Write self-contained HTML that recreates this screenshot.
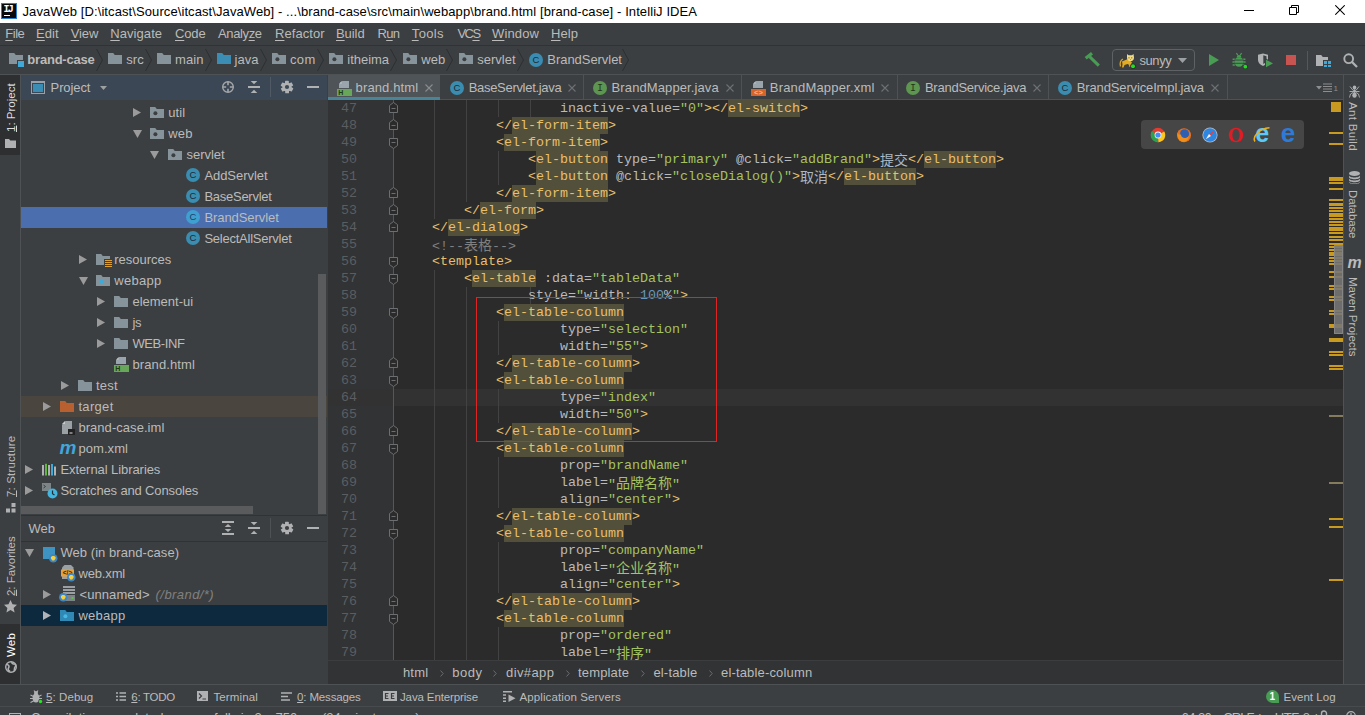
<!DOCTYPE html>
<html lang="en">
<head>
<meta charset="utf-8">
<title>JavaWeb - brand.html - IntelliJ IDEA</title>
<style>
*{box-sizing:border-box;margin:0;padding:0}
html,body{width:1365px;height:715px;overflow:hidden;background:#3c3f41}
body{position:relative;font-family:"Liberation Sans","Noto Sans CJK SC",sans-serif;font-size:13px;color:#bbbbbb;-webkit-font-smoothing:antialiased}
.abs{position:absolute}
.t{position:absolute;white-space:nowrap;line-height:16px}
u{text-decoration:underline;text-decoration-thickness:1px}
.t{text-underline-offset:2px}
/* title */
#title{position:absolute;left:0;top:0;width:1365px;height:23px;background:#fff;color:#000}
/* menu */
#menu{position:absolute;left:0;top:23px;width:1365px;height:23px;background:#3c3f41;border-bottom:1px solid #323232}
/* nav */
#nav{position:absolute;left:0;top:46px;width:1365px;height:29px;background:#3c3f41;border-bottom:1px solid #4f5254}
/* left stripe */
#lstripe{position:absolute;left:0;top:75px;width:21px;height:609px;background:#3c3f41;border-right:1px solid #4f5254}
/* project */
#proj{position:absolute;left:21px;top:75px;width:306px;height:441px;background:#3c3f41}
#projhead{position:absolute;left:0;top:0;width:306px;height:25px;background:#3b4754}
/* web */
#web{position:absolute;left:21px;top:516px;width:306px;height:169px;background:#3c3f41}
/* tabs */
#tabs{position:absolute;left:328px;top:75px;width:1015px;height:25px;background:#3c3f41;border-bottom:1px solid #4f5254}
/* editor */
#editor{position:absolute;left:328px;top:100px;width:1015px;height:560px;background:#2b2b2b;overflow:hidden}
#gutter{position:absolute;left:0;top:0;width:66px;height:560px;background:#313335}
/* crumbs */
#crumbs{position:absolute;left:328px;top:660px;width:1015px;height:25px;background:#313335;border-top:1px solid #3b3d3f}
/* right stripe */
#rstripe{position:absolute;left:1343px;top:75px;width:22px;height:609px;background:#3c3f41;border-left:1px solid #4f5254}
/* bottom */
#bottom{position:absolute;left:0;top:684px;width:1365px;height:23px;background:#3c3f41;border-top:1px solid #4f5254}
#status{position:absolute;left:0;top:706px;width:1365px;height:9px;background:#3c3f41;border-top:1px solid #484b4d}.ln{position:absolute;left:0;width:29px;text-align:right;font-family:"Liberation Mono",monospace;font-size:13.33px;line-height:17px;height:17px;color:#5b5e61}
.cl{position:absolute;white-space:pre;font-family:"Liberation Mono","Noto Sans CJK SC",monospace;font-size:13.33px;line-height:17px;height:17px;color:#a9b7c6}
.cl span{display:inline-block;height:17px;vertical-align:top}
.p{color:#e8bf6a}.h{color:#e8bf6a;background:#52503a}.a{color:#bababa}.s{color:#a5c261}.c{color:#808080}.n{color:#6897bb}.x{color:#a9b7c6}

.t.v{text-underline-offset:1px}
.k{font-weight:normal;font-size:14px;font-family:"Noto Sans CJK SC",sans-serif}

</style>
</head>
<body>
<div id="title">
<div class="abs" style="left:1px;top:3px;width:16px;height:16px;background:#0a0a0a;border:1px solid #2f7fd0"></div>
<span class="t" style="left:3.500px;top:4.500px;font-family:'Liberation Mono',monospace;font-size:10px;font-weight:bold;color:#fff;line-height:9px;letter-spacing:-1.700px">IJ</span>
<div class="abs" style="left:4px;top:15px;width:6px;height:1px;background:#fff"></div>
<span class="t" id="t0" style="left:22.5px;top:3.7px;font-size:13px;letter-spacing:0.091px;color:#000;">JavaWeb [D:\itcast\Source\itcast\JavaWeb] - ...\brand-case\src\main\webapp\brand.html [brand-case] - IntelliJ IDEA</span>
<div class="abs" style="left:1244px;top:10px;width:10px;height:1px;background:#000"></div>
<svg class="abs" style="left:1289px;top:5px" width="10" height="10" viewBox="0 0 10 10"><path d="M0.500 2.500h7v7h-7z M2.500 2.500v-2h7v7h-2" fill="none" stroke="#000" stroke-width="1"/></svg>
<svg class="abs" style="left:1335px;top:5px" width="10" height="10" viewBox="0 0 10 10"><path d="M0.300 0.300l9.400 9.400M9.700 0.300l-9.400 9.400" stroke="#000" stroke-width="1.050" fill="none"/></svg>
</div>
<div id="menu"></div>
<span class="t" id="t1" style="left:5.3px;top:26.3px;font-size:13px;letter-spacing:-0.492px;"><u>F</u>ile</span>
<span class="t" id="t2" style="left:36.1px;top:26.3px;font-size:13px;letter-spacing:0.023px;"><u>E</u>dit</span>
<span class="t" id="t3" style="left:70.7px;top:26.3px;font-size:13px;letter-spacing:-0.113px;"><u>V</u>iew</span>
<span class="t" id="t4" style="left:110.3px;top:26.3px;font-size:13px;letter-spacing:0.061px;"><u>N</u>avigate</span>
<span class="t" id="t5" style="left:175.0px;top:26.3px;font-size:13px;letter-spacing:-0.123px;"><u>C</u>ode</span>
<span class="t" id="t6" style="left:218.0px;top:26.3px;font-size:13px;letter-spacing:-0.381px;">Analy<u>z</u>e</span>
<span class="t" id="t7" style="left:275.0px;top:26.3px;font-size:13px;letter-spacing:0.057px;"><u>R</u>efactor</span>
<span class="t" id="t8" style="left:336.0px;top:26.3px;font-size:13px;letter-spacing:-0.064px;"><u>B</u>uild</span>
<span class="t" id="t9" style="left:377.5px;top:26.3px;font-size:13px;letter-spacing:-0.720px;">R<u>u</u>n</span>
<span class="t" id="t10" style="left:411.8px;top:26.3px;font-size:13px;letter-spacing:0.368px;"><u>T</u>ools</span>
<span class="t" id="t11" style="left:457.4px;top:26.3px;font-size:13px;letter-spacing:-1.511px;">VC<u>S</u></span>
<span class="t" id="t12" style="left:492.0px;top:26.3px;font-size:13px;letter-spacing:0.125px;"><u>W</u>indow</span>
<span class="t" id="t13" style="left:551.0px;top:26.3px;font-size:13px;letter-spacing:0.088px;"><u>H</u>elp</span>
<div id="nav"></div>
<svg class="abs" style="left:9px;top:53px" width="14" height="11" viewBox="0 0 14 11"><path d="M0 0h5.2l1.6 2H14v9H0z" fill="#87939a"/></svg>
<div class="abs" style="left:17px;top:60px;width:8px;height:8px;background:#3c3f41"></div>
<div class="abs" style="left:18px;top:61px;width:6px;height:6px;background:#40a9d8"></div>
<span class="t" id="t14" style="left:27.3px;top:51.5px;font-size:13px;letter-spacing:-0.208px;font-weight:bold;">brand-case</span>
<svg class="abs" style="left:96px;top:48px" width="7" height="24" viewBox="0 0 7 24"><path d="M0.5 1L6.5 12.0L0.5 23" fill="none" stroke="#2d2f31" stroke-width="1"/></svg>
<svg class="abs" style="left:144.8px;top:48px" width="7" height="24" viewBox="0 0 7 24"><path d="M0.5 1L6.5 12.0L0.5 23" fill="none" stroke="#2d2f31" stroke-width="1"/></svg>
<svg class="abs" style="left:204.7px;top:48px" width="7" height="24" viewBox="0 0 7 24"><path d="M0.5 1L6.5 12.0L0.5 23" fill="none" stroke="#2d2f31" stroke-width="1"/></svg>
<svg class="abs" style="left:259.7px;top:48px" width="7" height="24" viewBox="0 0 7 24"><path d="M0.5 1L6.5 12.0L0.5 23" fill="none" stroke="#2d2f31" stroke-width="1"/></svg>
<svg class="abs" style="left:316.9px;top:48px" width="7" height="24" viewBox="0 0 7 24"><path d="M0.5 1L6.5 12.0L0.5 23" fill="none" stroke="#2d2f31" stroke-width="1"/></svg>
<svg class="abs" style="left:390px;top:48px" width="7" height="24" viewBox="0 0 7 24"><path d="M0.5 1L6.5 12.0L0.5 23" fill="none" stroke="#2d2f31" stroke-width="1"/></svg>
<svg class="abs" style="left:446px;top:48px" width="7" height="24" viewBox="0 0 7 24"><path d="M0.5 1L6.5 12.0L0.5 23" fill="none" stroke="#2d2f31" stroke-width="1"/></svg>
<svg class="abs" style="left:516.5px;top:48px" width="7" height="24" viewBox="0 0 7 24"><path d="M0.5 1L6.5 12.0L0.5 23" fill="none" stroke="#2d2f31" stroke-width="1"/></svg>
<svg class="abs" style="left:622.3px;top:48px" width="7" height="24" viewBox="0 0 7 24"><path d="M0.5 1L6.5 12.0L0.5 23" fill="none" stroke="#2d2f31" stroke-width="1"/></svg>
<svg class="abs" style="left:108px;top:53px" width="14" height="11" viewBox="0 0 14 11"><path d="M0 0h5.2l1.6 2H14v9H0z" fill="#87939a"/></svg>
<span class="t" id="t15" style="left:126.3px;top:51.5px;font-size:13px;letter-spacing:0.052px;">src</span>
<svg class="abs" style="left:157px;top:53px" width="14" height="11" viewBox="0 0 14 11"><path d="M0 0h5.2l1.6 2H14v9H0z" fill="#87939a"/></svg>
<span class="t" id="t16" style="left:175.0px;top:51.5px;font-size:13px;letter-spacing:0.103px;">main</span>
<svg class="abs" style="left:217px;top:53px" width="14" height="11" viewBox="0 0 14 11"><path d="M0 0h5.2l1.6 2H14v9H0z" fill="#3b8db3"/></svg>
<span class="t" id="t17" style="left:234.6px;top:51.5px;font-size:13px;letter-spacing:-0.015px;">java</span>
<svg class="abs" style="left:272px;top:53px" width="14" height="11" viewBox="0 0 14 11"><path d="M0 0h5.2l1.6 2H14v9H0z" fill="#87939a"/><circle cx="5.400" cy="6.300" r="2" fill="#3c3f41"/></svg>
<span class="t" id="t18" style="left:290.0px;top:51.5px;font-size:13px;letter-spacing:0.346px;">com</span>
<svg class="abs" style="left:329px;top:53px" width="14" height="11" viewBox="0 0 14 11"><path d="M0 0h5.2l1.6 2H14v9H0z" fill="#87939a"/><circle cx="5.400" cy="6.300" r="2" fill="#3c3f41"/></svg>
<span class="t" id="t19" style="left:347.3px;top:51.5px;font-size:13px;letter-spacing:-0.032px;">itheima</span>
<svg class="abs" style="left:403px;top:53px" width="14" height="11" viewBox="0 0 14 11"><path d="M0 0h5.2l1.6 2H14v9H0z" fill="#87939a"/><circle cx="5.400" cy="6.300" r="2" fill="#3c3f41"/></svg>
<span class="t" id="t20" style="left:421.3px;top:51.5px;font-size:13px;letter-spacing:-0.020px;">web</span>
<svg class="abs" style="left:459px;top:53px" width="14" height="11" viewBox="0 0 14 11"><path d="M0 0h5.2l1.6 2H14v9H0z" fill="#87939a"/><circle cx="5.400" cy="6.300" r="2" fill="#3c3f41"/></svg>
<span class="t" id="t21" style="left:477.3px;top:51.5px;font-size:13px;">servlet</span>
<svg class="abs" style="left:529px;top:53px" width="14" height="14" viewBox="0 0 14 14"><circle cx="7.0" cy="7.0" r="7.0" fill="#3a8cb0"/><text x="7.0" y="10.4" text-anchor="middle" font-family="Liberation Sans, sans-serif" font-size="9.5" font-weight="normal" fill="#1e2a30">C</text></svg>
<span class="t" id="t22" style="left:547.3px;top:51.5px;font-size:13px;letter-spacing:-0.046px;">BrandServlet</span>
<svg class="abs" style="left:1084px;top:52px" width="17" height="16" viewBox="0 0 17 16"><path d="M1.700 6.200L8 1.300" stroke="#499c54" stroke-width="3.200" fill="none"/><path d="M5.600 4.600L14.800 13.600" stroke="#499c54" stroke-width="3" fill="none"/></svg>
<div class="abs" style="left:1112px;top:49px;width:83px;height:22px;border:1px solid #5f6264;border-radius:4px"></div>
<svg class="abs" style="left:1119px;top:53px" width="17" height="16" viewBox="0 0 17 16"><path d="M1.500 13.500c-1-3 0-6.500 2.500-7.500" stroke="#d9a62c" stroke-width="1.300" fill="none"/><path d="M3 8.500l6-2.500 4 3.500-1.500 2.500-3-1-3 1-1 2.500H3l0.500-3z" fill="#e3aa22"/><path d="M9.500 11l1 3h1.300l-0.500-3z" fill="#d9a62c"/><path d="M8 1l1.500 1.200h3.500L14.500 1l0.500 3.500c0 2.500-1.500 3.800-3.500 3.800S8 7 8 4.500z" fill="#f2dc82"/><circle cx="10" cy="4.800" r="0.600" fill="#5a4a1a"/><circle cx="12.800" cy="4.800" r="0.600" fill="#5a4a1a"/><path d="M10.800 6.300h1.200l-0.600 0.700z" fill="#5a4a1a"/><circle cx="14" cy="13.200" r="2.700" fill="#2a2d2e"/><circle cx="14" cy="13.200" r="2" fill="#1fe01f"/></svg>
<span class="t" id="t23" style="left:1139.5px;top:52.9px;font-size:13px;letter-spacing:-0.434px;">sunyy</span>
<svg class="abs" style="left:1178px;top:58px" width="9" height="5" viewBox="0 0 9 5"><path d="M0 0H9L4.5 5z" fill="#9da0a2"/></svg>
<svg class="abs" style="left:1209px;top:54px" width="10" height="12" viewBox="0 0 10 12"><path d="M0 0l10 6-10 6z" fill="#499c54"/></svg>
<svg class="abs" style="left:1232px;top:52px" width="17" height="17" viewBox="0 0 17 17"><ellipse cx="7" cy="10" rx="4.500" ry="4.800" fill="#499c54"/><path d="M4.600 5.400a2.400 2.300 0 0 1 4.800 0z" fill="#499c54"/><path d="M4.400 1.200l1.400 1.900M9.600 1.200L8.200 3.100" stroke="#499c54" stroke-width="1.200" fill="none"/><path d="M0.600 7.200h2.200M0.400 10h2.200M0.600 12.900h2.200M13.400 7.200h-2.200M13.600 10h-2.200M13.400 12.900h-2.200" stroke="#499c54" stroke-width="1.500" fill="none"/><path d="M2.500 8.100h9M2.500 11.300h9" stroke="#3c3f41" stroke-width="0.900"/><circle cx="13.300" cy="14.700" r="2.500" fill="#2a2d2e"/><circle cx="13.300" cy="14.700" r="1.900" fill="#1fe01f"/></svg>
<svg class="abs" style="left:1257px;top:53px" width="17" height="16" viewBox="0 0 17 16"><path d="M1 1.800L6 0.500l5 1.300V7c0 3-2.500 5-5 6C3.500 12 1 10 1 7z" fill="#afb1b3"/><path d="M6.300 2.300V11C9 9.500 9.500 8 9.500 6.500V3.200z" fill="#3c3f41"/><path d="M8 5l9 5.200-9 5.200z" fill="#3c3f41"/><path d="M9 6.700l7 3.700-7 3.900z" fill="#499c54"/></svg>
<div class="abs" style="left:1286px;top:55px;width:10px;height:10px;background:#c75450"></div>
<div class="abs" style="left:1307px;top:51px;width:1px;height:19px;background:#555759"></div>
<svg class="abs" style="left:1316px;top:55px" width="16" height="12" viewBox="0 0 16 12"><path d="M0 0h5.2l1.600 2H12v9H0z" fill="#afb1b3"/><rect x="7" y="5" width="9" height="7" fill="#3c3f41"/><rect x="8" y="6" width="3" height="3" fill="#40a9d8"/><rect x="12" y="6" width="3" height="3" fill="#40a9d8"/><rect x="8" y="10" width="3" height="2" fill="#40a9d8"/><rect x="12" y="10" width="3" height="2" fill="#40a9d8"/></svg>
<svg class="abs" style="left:1343px;top:53px" width="15" height="15" viewBox="0 0 15 15"><circle cx="5.700" cy="5.700" r="4.400" fill="none" stroke="#afb1b3" stroke-width="1.900"/><path d="M9 9l5 5" stroke="#afb1b3" stroke-width="2.300"/></svg>
<div id="lstripe"></div>
<div class="abs" style="left:0;top:75px;width:20px;height:80px;background:#2d2f30"></div>
<span class="t v" id="t24" style="left:10.8px;top:132.4px;font-size:11.5px;transform-origin:0 0;transform:rotate(-90deg) translateY(-8px);letter-spacing:0.011px;color:#dddddd;"><u>1</u>: Project</span>
<svg class="abs" style="left:5px;top:139px" width="11" height="9" viewBox="0 0 11 9"><path d="M0 0h4l1.300 1.600H11v7.400H0z" fill="#afb1b3"/></svg>
<span class="t v" id="t25" style="left:10.8px;top:497.3px;font-size:11.5px;transform-origin:0 0;transform:rotate(-90deg) translateY(-8px);letter-spacing:0.153px;color:#bbbbbb;"><u>7</u>: Structure</span>
<svg class="abs" style="left:6px;top:503px" width="10" height="10" viewBox="0 0 10 10"><rect x="5.500" y="0" width="4" height="4" fill="#afb1b3"/><rect x="0" y="5.500" width="4" height="4" fill="#afb1b3"/><rect x="5.500" y="5.500" width="4" height="4" fill="#afb1b3"/></svg>
<span class="t v" id="t26" style="left:10.8px;top:595.5px;font-size:11.5px;transform-origin:0 0;transform:rotate(-90deg) translateY(-8px);letter-spacing:-0.033px;color:#bbbbbb;"><u>2</u>: Favorites</span>
<svg class="abs" style="left:4px;top:600px" width="13" height="13" viewBox="0 0 13 13"><path d="M6.500 0l2 4.300 4.500 0.500-3.400 3.100 1 4.600-4.100-2.400-4.100 2.400 1-4.600L0 4.800l4.500-0.500z" fill="#afb1b3"/></svg>
<div class="abs" style="left:0;top:624px;width:20px;height:60px;background:#2d2f30"></div>
<span class="t v" id="t27" style="left:10.8px;top:657.2px;font-size:11.5px;transform-origin:0 0;transform:rotate(-90deg) translateY(-8px);letter-spacing:0.182px;color:#ffffff;">Web</span>
<svg class="abs" style="left:5px;top:661px" width="12" height="12" viewBox="0 0 12 12"><circle cx="6" cy="6" r="5.300" fill="none" stroke="#afb1b3" stroke-width="1.400"/><path d="M2 3.500c2 0.500 2.500 2 1.500 3.500s0 2.500 1.500 3.500M7 1c-0.500 1.500 1 2 2.500 2s1.500 2 0.500 3 0 2.500-1 4" fill="none" stroke="#afb1b3" stroke-width="1.600"/></svg>
<div id="proj"><div id="projhead"></div></div>
<div class="abs" style="left:31px;top:81px;width:14px;height:13px;border:1px solid #9aa0a6;border-top:2px solid #9aa0a6;background:#3a8db5;box-shadow:inset 0 0 0 1px #3b4754"></div>
<span class="t" id="t28" style="left:50.6px;top:79.5px;font-size:13px;letter-spacing:-0.110px;">Project</span>
<svg class="abs" style="left:100px;top:86px" width="7" height="4" viewBox="0 0 7 4"><path d="M0 0H7L3.5 4z" fill="#9da0a2"/></svg>
<svg class="abs" style="left:222px;top:81px" width="12" height="12" viewBox="0 0 12 12"><circle cx="6" cy="6" r="5.300" fill="none" stroke="#a4a7a9" stroke-width="1.400"/><path d="M6 0.800v3.400M6 11.200V7.800M0.800 6h3.400M11.200 6H7.800" stroke="#a4a7a9" stroke-width="1.600"/></svg>
<svg class="abs" style="left:248px;top:81px" width="12" height="12" viewBox="0 0 12 12"><rect x="0" y="5" width="12" height="2" fill="#afb1b3"/><path d="M2.700 0h6.600L6 3.200z" fill="#afb1b3"/><path d="M2.700 12h6.600L6 8.800z" fill="#afb1b3"/></svg>
<div class="abs" style="left:270px;top:77px;width:1px;height:20px;background:#505a64"></div>
<svg class="abs" style="left:280px;top:80px" width="14" height="14" viewBox="0 0 14 14"><g transform="translate(7,7)"><rect x="-2" y="-6.300" width="3.800" height="3.200" rx="0.600" transform="rotate(0)" fill="#afb1b3"/><rect x="-2" y="-6.300" width="3.800" height="3.200" rx="0.600" transform="rotate(60)" fill="#afb1b3"/><rect x="-2" y="-6.300" width="3.800" height="3.200" rx="0.600" transform="rotate(120)" fill="#afb1b3"/><rect x="-2" y="-6.300" width="3.800" height="3.200" rx="0.600" transform="rotate(180)" fill="#afb1b3"/><rect x="-2" y="-6.300" width="3.800" height="3.200" rx="0.600" transform="rotate(240)" fill="#afb1b3"/><rect x="-2" y="-6.300" width="3.800" height="3.200" rx="0.600" transform="rotate(300)" fill="#afb1b3"/><circle r="4.500" fill="#afb1b3"/><circle r="2.100" fill="#3b4754" class="gh"/></g></svg>
<div class="abs" style="left:307px;top:86px;width:12px;height:2px;background:#afb1b3"></div>
<div class="abs" style="left:21px;top:207px;width:306px;height:21px;background:#4b6eaf"></div>
<div class="abs" style="left:21px;top:396px;width:306px;height:21px;background:#4a453e"></div>
<svg class="abs" style="left:133px;top:108px" width="8" height="9" viewBox="0 0 8 9"><path d="M0 0L8 4.5L0 9z" fill="#9b9b9b"/></svg>
<svg class="abs" style="left:150px;top:107px" width="14" height="11" viewBox="0 0 14 11"><path d="M0 0h5.2l1.6 2H14v9H0z" fill="#87939a"/><circle cx="5.400" cy="6.300" r="2" fill="#3c3f41"/></svg>
<span class="t" id="t29" style="left:168.3px;top:104.5px;font-size:13px;letter-spacing:0.094px;">util</span>
<svg class="abs" style="left:132.5px;top:130px" width="9" height="8" viewBox="0 0 9 8"><path d="M0 0H9L4.5 8z" fill="#9b9b9b"/></svg>
<svg class="abs" style="left:150px;top:128px" width="14" height="11" viewBox="0 0 14 11"><path d="M0 0h5.2l1.6 2H14v9H0z" fill="#87939a"/><circle cx="5.400" cy="6.300" r="2" fill="#3c3f41"/></svg>
<span class="t" id="t30" style="left:168.3px;top:125.5px;font-size:13px;letter-spacing:0.147px;">web</span>
<svg class="abs" style="left:150.0px;top:151px" width="9" height="8" viewBox="0 0 9 8"><path d="M0 0H9L4.5 8z" fill="#9b9b9b"/></svg>
<svg class="abs" style="left:168px;top:149px" width="14" height="11" viewBox="0 0 14 11"><path d="M0 0h5.2l1.6 2H14v9H0z" fill="#87939a"/><circle cx="5.400" cy="6.300" r="2" fill="#3c3f41"/></svg>
<span class="t" id="t31" style="left:186.5px;top:146.5px;font-size:13px;letter-spacing:-0.028px;">servlet</span>
<svg class="abs" style="left:186px;top:168px" width="14" height="14" viewBox="0 0 14 14"><circle cx="7.0" cy="7.0" r="7.0" fill="#3a8cb0"/><text x="7.0" y="10.4" text-anchor="middle" font-family="Liberation Sans, sans-serif" font-size="9.5" font-weight="normal" fill="#1e2a30">C</text></svg>
<span class="t" id="t32" style="left:204.4px;top:167.5px;font-size:13px;letter-spacing:-0.049px;">AddServlet</span>
<svg class="abs" style="left:186px;top:189px" width="14" height="14" viewBox="0 0 14 14"><circle cx="7.0" cy="7.0" r="7.0" fill="#3a8cb0"/><text x="7.0" y="10.4" text-anchor="middle" font-family="Liberation Sans, sans-serif" font-size="9.5" font-weight="normal" fill="#1e2a30">C</text></svg>
<span class="t" id="t33" style="left:204.4px;top:188.5px;font-size:13px;letter-spacing:-0.263px;">BaseServlet</span>
<svg class="abs" style="left:186px;top:210px" width="14" height="14" viewBox="0 0 14 14"><circle cx="7.0" cy="7.0" r="7.0" fill="#3f9fd0"/><text x="7.0" y="10.4" text-anchor="middle" font-family="Liberation Sans, sans-serif" font-size="9.5" font-weight="normal" fill="#20406a">C</text></svg>
<span class="t" id="t34" style="left:204.4px;top:209.5px;font-size:13px;letter-spacing:-0.063px;">BrandServlet</span>
<svg class="abs" style="left:186px;top:231px" width="14" height="14" viewBox="0 0 14 14"><circle cx="7.0" cy="7.0" r="7.0" fill="#3a8cb0"/><text x="7.0" y="10.4" text-anchor="middle" font-family="Liberation Sans, sans-serif" font-size="9.5" font-weight="normal" fill="#1e2a30">C</text></svg>
<span class="t" id="t35" style="left:204.4px;top:230.5px;font-size:13px;letter-spacing:-0.240px;">SelectAllServlet</span>
<svg class="abs" style="left:79px;top:255px" width="8" height="9" viewBox="0 0 8 9"><path d="M0 0L8 4.5L0 9z" fill="#9b9b9b"/></svg>
<svg class="abs" style="left:96px;top:254px" width="14" height="11" viewBox="0 0 14 11"><path d="M0 0h5.2l1.6 2H14v9H0z" fill="#87939a"/></svg><svg class="abs" style="left:104px;top:259px" width="8" height="8" viewBox="0 0 8 8"><rect width="8" height="8" fill="#3c3f41"/><path d="M1 1.500h7M1 3.500h7M1 5.500h7M1 7.500h7" stroke="#e0a030" stroke-width="1"/></svg>
<span class="t" id="t36" style="left:114.3px;top:251.5px;font-size:13px;letter-spacing:-0.020px;">resources</span>
<svg class="abs" style="left:78.5px;top:277px" width="9" height="8" viewBox="0 0 9 8"><path d="M0 0H9L4.5 8z" fill="#9b9b9b"/></svg>
<svg class="abs" style="left:96px;top:275px" width="14" height="11" viewBox="0 0 14 11"><path d="M0 0h5.2l1.6 2H14v9H0z" fill="#87939a"/></svg><div class="abs" style="left:100px;top:280px;width:4px;height:3px;background:#40a9d8"></div>
<span class="t" id="t37" style="left:114.3px;top:272.5px;font-size:13px;letter-spacing:0.259px;">webapp</span>
<svg class="abs" style="left:97px;top:297px" width="8" height="9" viewBox="0 0 8 9"><path d="M0 0L8 4.5L0 9z" fill="#9b9b9b"/></svg>
<svg class="abs" style="left:114px;top:296px" width="14" height="11" viewBox="0 0 14 11"><path d="M0 0h5.2l1.6 2H14v9H0z" fill="#87939a"/></svg>
<span class="t" id="t38" style="left:132.4px;top:293.5px;font-size:13px;letter-spacing:0.010px;">element-ui</span>
<svg class="abs" style="left:97px;top:318px" width="8" height="9" viewBox="0 0 8 9"><path d="M0 0L8 4.5L0 9z" fill="#9b9b9b"/></svg>
<svg class="abs" style="left:114px;top:317px" width="14" height="11" viewBox="0 0 14 11"><path d="M0 0h5.2l1.6 2H14v9H0z" fill="#87939a"/></svg>
<span class="t" id="t39" style="left:132.4px;top:314.5px;font-size:13px;letter-spacing:-0.195px;">js</span>
<svg class="abs" style="left:97px;top:339px" width="8" height="9" viewBox="0 0 8 9"><path d="M0 0L8 4.5L0 9z" fill="#9b9b9b"/></svg>
<svg class="abs" style="left:114px;top:338px" width="14" height="11" viewBox="0 0 14 11"><path d="M0 0h5.2l1.6 2H14v9H0z" fill="#87939a"/></svg>
<span class="t" id="t40" style="left:132.4px;top:335.5px;font-size:13px;letter-spacing:-0.384px;">WEB-INF</span>
<svg class="abs" style="left:114px;top:357px" width="15" height="15" viewBox="0 0 15 15"><path d="M5.300 0H12v7H2V3.300z" fill="#99a4ac"/><path d="M4.700 0v2.700H2z" fill="#b8c0c6"/><rect x="0" y="8" width="15" height="7" fill="#68a659"/><text x="1.2" y="14.2" font-family="Liberation Sans, sans-serif" font-size="7" font-weight="bold" fill="#1f3a18">H</text></svg>
<span class="t" id="t41" style="left:132.4px;top:356.5px;font-size:13px;letter-spacing:0.118px;">brand.html</span>
<svg class="abs" style="left:61px;top:381px" width="8" height="9" viewBox="0 0 8 9"><path d="M0 0L8 4.5L0 9z" fill="#9b9b9b"/></svg>
<svg class="abs" style="left:78px;top:380px" width="14" height="11" viewBox="0 0 14 11"><path d="M0 0h5.2l1.6 2H14v9H0z" fill="#87939a"/></svg>
<span class="t" id="t42" style="left:96.0px;top:377.5px;font-size:13px;letter-spacing:0.208px;">test</span>
<svg class="abs" style="left:43px;top:402px" width="8" height="9" viewBox="0 0 8 9"><path d="M0 0L8 4.5L0 9z" fill="#9b9b9b"/></svg>
<svg class="abs" style="left:60px;top:401px" width="14" height="11" viewBox="0 0 14 11"><path d="M0 0h5.2l1.6 2H14v9H0z" fill="#b8602f"/></svg>
<span class="t" id="t43" style="left:78.4px;top:398.5px;font-size:13px;letter-spacing:0.325px;">target</span>
<svg class="abs" style="left:61px;top:421px" width="14" height="14" viewBox="0 0 14 14"><path d="M4.500 0H11v13H1V3.500z" fill="#9aa0a4"/><path d="M4 0v3H1z" fill="#c7cbcd"/><rect x="7" y="8" width="7" height="6" fill="#222"/><rect x="8.500" y="11.500" width="3" height="1" fill="#ddd"/></svg>
<span class="t" id="t44" style="left:78.4px;top:419.5px;font-size:13px;letter-spacing:0.052px;">brand-case.iml</span>
<span class="t" style="left:59.500px;top:440px;font-size:19px;font-style:italic;font-weight:bold;color:#3fa7dc;line-height:16px;letter-spacing:-1px">m</span>
<span class="t" id="t45" style="left:78.4px;top:440.5px;font-size:13px;letter-spacing:0.068px;">pom.xml</span>
<svg class="abs" style="left:25px;top:465px" width="8" height="9" viewBox="0 0 8 9"><path d="M0 0L8 4.5L0 9z" fill="#9b9b9b"/></svg>
<svg class="abs" style="left:42px;top:463px" width="14" height="13" viewBox="0 0 14 13"><rect x="0" y="2" width="2" height="10.500" fill="#afb1b3"/><rect x="3" y="0.800" width="2" height="11.700" fill="#62b543"/><rect x="6" y="2" width="2" height="10.500" fill="#afb1b3"/><rect x="9" y="1" width="2" height="11.500" fill="#40a9d8"/><rect x="12" y="3.500" width="2" height="9" fill="#afb1b3"/></svg>
<span class="t" id="t46" style="left:60.4px;top:461.5px;font-size:13px;letter-spacing:-0.070px;">External Libraries</span>
<svg class="abs" style="left:25px;top:486px" width="8" height="9" viewBox="0 0 8 9"><path d="M0 0L8 4.5L0 9z" fill="#9b9b9b"/></svg>
<svg class="abs" style="left:42px;top:483px" width="16" height="16" viewBox="0 0 16 16"><rect x="0" y="0" width="9" height="8" fill="#7d8488"/><path d="M1.500 2l2 1.500-2 1.500" stroke="#3c3f41" fill="none" stroke-width="1"/><circle cx="10.500" cy="10.500" r="5" fill="#40b6e0"/><path d="M10.500 7.500v3.200l2 1.200" stroke="#2b2b2b" fill="none" stroke-width="1.200"/></svg>
<span class="t" id="t47" style="left:60.4px;top:482.5px;font-size:13px;letter-spacing:-0.142px;">Scratches and Consoles</span>
<div class="abs" style="left:318px;top:274px;width:8px;height:240px;background:#595b5d"></div>
<div class="abs" style="left:21px;top:506px;width:232px;height:8px;background:#595b5d"></div>
<div class="abs" style="left:21px;top:515px;width:306px;height:1px;background:#323232"></div>
<div id="web"></div>
<span class="t" id="t48" style="left:28.4px;top:520.9px;font-size:13px;letter-spacing:0.067px;">Web</span>
<svg class="abs" style="left:222px;top:521px" width="12" height="14" viewBox="0 0 12 14"><rect x="0" y="0" width="12" height="2" fill="#afb1b3"/><rect x="0" y="12" width="12" height="2" fill="#afb1b3"/><path d="M2.700 6h6.600L6 3z" fill="#afb1b3"/><path d="M2.700 8h6.600L6 11z" fill="#afb1b3"/></svg>
<svg class="abs" style="left:248px;top:522px" width="12" height="12" viewBox="0 0 12 12"><rect x="0" y="5" width="12" height="2" fill="#afb1b3"/><path d="M2.700 0h6.600L6 3.200z" fill="#afb1b3"/><path d="M2.700 12h6.600L6 8.800z" fill="#afb1b3"/></svg>
<div class="abs" style="left:270px;top:518px;width:1px;height:20px;background:#4f5254"></div>
<svg class="abs" style="left:280px;top:521px" width="14" height="14" viewBox="0 0 14 14"><g transform="translate(7,7)"><rect x="-2" y="-6.300" width="3.800" height="3.200" rx="0.600" transform="rotate(0)" fill="#afb1b3"/><rect x="-2" y="-6.300" width="3.800" height="3.200" rx="0.600" transform="rotate(60)" fill="#afb1b3"/><rect x="-2" y="-6.300" width="3.800" height="3.200" rx="0.600" transform="rotate(120)" fill="#afb1b3"/><rect x="-2" y="-6.300" width="3.800" height="3.200" rx="0.600" transform="rotate(180)" fill="#afb1b3"/><rect x="-2" y="-6.300" width="3.800" height="3.200" rx="0.600" transform="rotate(240)" fill="#afb1b3"/><rect x="-2" y="-6.300" width="3.800" height="3.200" rx="0.600" transform="rotate(300)" fill="#afb1b3"/><circle r="4.500" fill="#afb1b3"/><circle r="2.100" fill="#3c3f41" class="gh"/></g></svg>
<div class="abs" style="left:307px;top:527px;width:12px;height:2px;background:#afb1b3"></div>
<div class="abs" style="left:21px;top:541px;width:306px;height:1px;background:#323232"></div>
<div class="abs" style="left:21px;top:605px;width:306px;height:21px;background:#0d293e"></div>
<svg class="abs" style="left:24.5px;top:549px" width="9" height="8" viewBox="0 0 9 8"><path d="M0 0H9L4.5 8z" fill="#9b9b9b"/></svg>
<svg class="abs" style="left:43px;top:547px" width="12" height="12" viewBox="0 0 12 12"><rect width="12" height="12" fill="#3d94c2"/></svg><svg class="abs" style="left:49px;top:554px" width="8.5" height="8.5" viewBox="0 0 9 9"><circle cx="4.500" cy="4.500" r="4.500" fill="#3f86c6"/><path d="M2 3.500c1-2 4-2 5 0 0.500 1.500-1 2-1.500 3.500h-2C3 5.500 1.500 5 2 3.500z" fill="#f4d03f"/></svg>
<span class="t" id="t49" style="left:60.4px;top:544.5px;font-size:13px;letter-spacing:0.061px;">Web (in brand-case)</span>
<svg class="abs" style="left:61px;top:565px" width="14" height="15" viewBox="0 0 14 15"><path d="M3.500 0H10l2.500 2.500V14H1V2.500z" fill="#9aa0a4"/><rect x="0" y="4.500" width="13" height="7" fill="#e8a13a"/><text x="6.500" y="10.300" text-anchor="middle" font-family="Liberation Sans, sans-serif" font-size="6.500" font-weight="bold" fill="#3a2405">&lt;/&gt;</text></svg><svg class="abs" style="left:67px;top:573px" width="8.5" height="8.5" viewBox="0 0 9 9"><circle cx="4.500" cy="4.500" r="4.500" fill="#3f86c6"/><path d="M2 3.500c1-2 4-2 5 0 0.500 1.500-1 2-1.500 3.500h-2C3 5.500 1.500 5 2 3.500z" fill="#f4d03f"/></svg>
<span class="t" id="t50" style="left:78.4px;top:565.5px;font-size:13px;letter-spacing:-0.141px;">web.xml</span>
<svg class="abs" style="left:43px;top:590px" width="8" height="9" viewBox="0 0 8 9"><path d="M0 0L8 4.5L0 9z" fill="#9b9b9b"/></svg>
<svg class="abs" style="left:63px;top:586px" width="12" height="15" viewBox="0 0 12 15"><rect x="0" y="0" width="12" height="2" fill="#9aa0a4"/><rect x="0" y="3" width="12" height="2" fill="#9aa0a4"/><rect x="0" y="6" width="12" height="2" fill="#9aa0a4"/><rect x="0" y="9" width="12" height="6" fill="#7d8488"/><rect x="8.500" y="11" width="2" height="2" fill="#58c24a"/></svg><svg class="abs" style="left:59px;top:593px" width="8.5" height="8.5" viewBox="0 0 9 9"><circle cx="4.500" cy="4.500" r="4.500" fill="#3f86c6"/><path d="M2 3.500c1-2 4-2 5 0 0.500 1.500-1 2-1.500 3.500h-2C3 5.500 1.500 5 2 3.500z" fill="#f4d03f"/></svg>
<span class="t" id="t51" style="left:79.5px;top:586.5px;font-size:13px;letter-spacing:0.077px;">&lt;unnamed&gt;</span>
<span class="t" id="t52" style="left:155.6px;top:586.5px;font-size:13px;letter-spacing:0.430px;color:#808080;font-style:italic;">(/brand/*)</span>
<svg class="abs" style="left:43px;top:611px" width="8" height="9" viewBox="0 0 8 9"><path d="M0 0L8 4.5L0 9z" fill="#b0b4b8"/></svg>
<svg class="abs" style="left:60px;top:610px" width="14" height="11" viewBox="0 0 14 11"><path d="M0 0h5.2l1.6 2H14v9H0z" fill="#3088b5"/><circle cx="5.400" cy="6.300" r="2" fill="#45b8e6"/></svg>
<span class="t" id="t53" style="left:78.4px;top:607.5px;font-size:13px;letter-spacing:0.276px;">webapp</span>
<div id="tabs"></div>
<div class="abs" style="left:328px;top:75px;width:112px;height:25px;background:#4e5457"></div>
<div class="abs" style="left:328px;top:97px;width:112px;height:3px;background:#4a8499"></div>
<div class="abs" style="left:583px;top:75px;width:1px;height:24px;background:#4f5254"></div>
<div class="abs" style="left:741px;top:75px;width:1px;height:24px;background:#4f5254"></div>
<div class="abs" style="left:896.5px;top:75px;width:1px;height:24px;background:#4f5254"></div>
<div class="abs" style="left:1048px;top:75px;width:1px;height:24px;background:#4f5254"></div>
<div class="abs" style="left:1226.5px;top:75px;width:1px;height:24px;background:#4f5254"></div>
<svg class="abs" style="left:337px;top:81px" width="15" height="15" viewBox="0 0 15 15"><path d="M5.300 0H12v7H2V3.300z" fill="#99a4ac"/><path d="M4.700 0v2.700H2z" fill="#b8c0c6"/><rect x="0" y="8" width="15" height="7" fill="#68a659"/><text x="1.2" y="14.2" font-family="Liberation Sans, sans-serif" font-size="7" font-weight="bold" fill="#1f3a18">H</text></svg>
<span class="t" id="t54" style="left:355.6px;top:79.5px;font-size:13px;letter-spacing:0.118px;">brand.html</span>
<svg class="abs" style="left:424.6px;top:83.5px" width="8" height="8" viewBox="0 0 8 8"><path d="M0.500 0.500l7 7M7.500 0.500l-7 7" stroke="#8a8d8f" stroke-width="1.100" fill="none"/></svg>
<svg class="abs" style="left:450px;top:81px" width="14" height="14" viewBox="0 0 14 14"><circle cx="7.0" cy="7.0" r="7.0" fill="#3a8cb0"/><text x="7.0" y="10.4" text-anchor="middle" font-family="Liberation Sans, sans-serif" font-size="9.5" font-weight="normal" fill="#1e2a30">C</text></svg>
<span class="t" id="t55" style="left:468.7px;top:79.5px;font-size:13px;letter-spacing:-0.304px;">BaseServlet.java</span>
<svg class="abs" style="left:567.5px;top:83.5px" width="8" height="8" viewBox="0 0 8 8"><path d="M0.500 0.500l7 7M7.500 0.500l-7 7" stroke="#6e7173" stroke-width="1.100" fill="none"/></svg>
<svg class="abs" style="left:593px;top:81px" width="14" height="14" viewBox="0 0 14 14"><circle cx="7.0" cy="7.0" r="7.0" fill="#5d9651"/><text x="7.0" y="10.4" text-anchor="middle" font-family="Liberation Mono, sans-serif" font-size="10" font-weight="normal" fill="#1f3518">I</text></svg>
<span class="t" id="t56" style="left:611.6px;top:79.5px;font-size:13px;letter-spacing:0.105px;">BrandMapper.java</span>
<svg class="abs" style="left:725.7px;top:83.5px" width="8" height="8" viewBox="0 0 8 8"><path d="M0.500 0.500l7 7M7.500 0.500l-7 7" stroke="#6e7173" stroke-width="1.100" fill="none"/></svg>
<svg class="abs" style="left:750.5px;top:81px" width="15" height="15" viewBox="0 0 15 15"><path d="M5.300 0H12v7H2V3.300z" fill="#99a4ac"/><path d="M4.700 0v2.700H2z" fill="#b8c0c6"/><rect x="0" y="8" width="15" height="7" fill="#d6642a"/><text x="7.5" y="14" text-anchor="middle" font-family="Liberation Sans, sans-serif" font-size="7.500" font-weight="bold" fill="#f6b88a">&lt;&gt;</text></svg>
<span class="t" id="t57" style="left:769.8px;top:79.5px;font-size:13px;letter-spacing:0.187px;">BrandMapper.xml</span>
<svg class="abs" style="left:881px;top:83.5px" width="8" height="8" viewBox="0 0 8 8"><path d="M0.500 0.500l7 7M7.500 0.500l-7 7" stroke="#6e7173" stroke-width="1.100" fill="none"/></svg>
<svg class="abs" style="left:906px;top:81px" width="14" height="14" viewBox="0 0 14 14"><circle cx="7.0" cy="7.0" r="7.0" fill="#5d9651"/><text x="7.0" y="10.4" text-anchor="middle" font-family="Liberation Mono, sans-serif" font-size="10" font-weight="normal" fill="#1f3518">I</text></svg>
<span class="t" id="t58" style="left:924.9px;top:79.5px;font-size:13px;letter-spacing:-0.241px;">BrandService.java</span>
<svg class="abs" style="left:1032.7px;top:83.5px" width="8" height="8" viewBox="0 0 8 8"><path d="M0.500 0.500l7 7M7.500 0.500l-7 7" stroke="#6e7173" stroke-width="1.100" fill="none"/></svg>
<svg class="abs" style="left:1058px;top:81px" width="14" height="14" viewBox="0 0 14 14"><circle cx="7.0" cy="7.0" r="7.0" fill="#3a8cb0"/><text x="7.0" y="10.4" text-anchor="middle" font-family="Liberation Sans, sans-serif" font-size="9.5" font-weight="normal" fill="#1e2a30">C</text></svg>
<span class="t" id="t59" style="left:1076.8px;top:79.5px;font-size:13px;letter-spacing:-0.141px;">BrandServiceImpl.java</span>
<svg class="abs" style="left:1210.5px;top:83.5px" width="8" height="8" viewBox="0 0 8 8"><path d="M0.500 0.500l7 7M7.500 0.500l-7 7" stroke="#6e7173" stroke-width="1.100" fill="none"/></svg>
<svg class="abs" style="left:1316px;top:86px" width="6" height="3.5" viewBox="0 0 6 3.5"><path d="M0 0H6L3.0 3.5z" fill="#8c8e90"/></svg>
<svg class="abs" style="left:1323px;top:83px" width="9" height="9" viewBox="0 0 9 9"><path d="M0 1h9M0 3.500h9M0 6h9M0 8.500h9" stroke="#8c8e90" stroke-width="1"/></svg>
<span class="t" style="left:1333.500px;top:80.500px;font-size:8px;color:#8c8e90">1</span>
<div id="editor"><div id="gutter"></div>
<div class="abs" style="left:0;top:289px;width:1015px;height:17px;background:#323232"></div>
<div class="abs" style="left:106px;top:0px;width:1px;height:119px;background:#424242"></div>
<div class="abs" style="left:138px;top:0px;width:1px;height:102px;background:#424242"></div>
<div class="abs" style="left:170px;top:0px;width:1px;height:17px;background:#424242"></div>
<div class="abs" style="left:170px;top:51px;width:1px;height:34px;background:#424242"></div>
<div class="abs" style="left:202px;top:0px;width:1px;height:17px;background:#424242"></div>
<div class="abs" style="left:106px;top:170px;width:1px;height:391px;background:#424242"></div>
<div class="abs" style="left:138px;top:187px;width:1px;height:374px;background:#424242"></div>
<div class="abs" style="left:170px;top:221px;width:1px;height:34px;background:#424242"></div>
<div class="abs" style="left:170px;top:289px;width:1px;height:34px;background:#424242"></div>
<div class="abs" style="left:170px;top:357px;width:1px;height:51px;background:#424242"></div>
<div class="abs" style="left:170px;top:442px;width:1px;height:51px;background:#424242"></div>
<div class="abs" style="left:170px;top:527px;width:1px;height:34px;background:#424242"></div>
<div class="abs" style="left:202px;top:187px;width:1px;height:17px;background:#424242"></div>
<div class="ln" style="top:0px">47</div>
<div class="cl" style="top:0px;left:232px"><span class="a">inactive-value=</span><span class="s">"0"</span><span class="p">&gt;&lt;/</span><span class="h">el-switch</span><span class="p">&gt;</span></div>
<div class="ln" style="top:17px">48</div>
<div class="cl" style="top:17px;left:168px"><span class="p">&lt;/</span><span class="h">el-form-item</span><span class="p">&gt;</span></div>
<div class="ln" style="top:34px">49</div>
<div class="cl" style="top:34px;left:168px"><span class="p">&lt;</span><span class="h">el-form-item</span><span class="p">&gt;</span></div>
<div class="ln" style="top:51px">50</div>
<div class="cl" style="top:51px;left:200px"><span class="p">&lt;</span><span class="h">el-button</span><span class="a"> type=</span><span class="s">"primary"</span><span class="a"> @click=</span><span class="s">"addBrand"</span><span class="p">&gt;</span><span class="x"><b class="k">提交</b></span><span class="p">&lt;/</span><span class="h">el-button</span><span class="p">&gt;</span></div>
<div class="ln" style="top:68px">51</div>
<div class="cl" style="top:68px;left:200px"><span class="p">&lt;</span><span class="h">el-button</span><span class="a"> @click=</span><span class="s">"closeDialog()"</span><span class="p">&gt;</span><span class="x"><b class="k">取消</b></span><span class="p">&lt;/</span><span class="h">el-button</span><span class="p">&gt;</span></div>
<div class="ln" style="top:85px">52</div>
<div class="cl" style="top:85px;left:168px"><span class="p">&lt;/</span><span class="h">el-form-item</span><span class="p">&gt;</span></div>
<div class="ln" style="top:102px">53</div>
<div class="cl" style="top:102px;left:136px"><span class="p">&lt;/</span><span class="h">el-form</span><span class="p">&gt;</span></div>
<div class="ln" style="top:119px">54</div>
<div class="cl" style="top:119px;left:104px"><span class="p">&lt;/</span><span class="h">el-dialog</span><span class="p">&gt;</span></div>
<div class="ln" style="top:136px">55</div>
<div class="cl" style="top:136px;left:104px"><span class="c">&lt;!--<b class="k">表格</b>--&gt;</span></div>
<div class="ln" style="top:153px">56</div>
<div class="cl" style="top:153px;left:104px"><span class="p">&lt;template&gt;</span></div>
<div class="ln" style="top:170px">57</div>
<div class="cl" style="top:170px;left:136px"><span class="p">&lt;</span><span class="h">el-table</span><span class="a"> :data=</span><span class="s">"tableData"</span></div>
<div class="ln" style="top:187px">58</div>
<div class="cl" style="top:187px;left:200px"><span class="a">style=</span><span class="s">"</span><span class="a">width: </span><span class="n">100</span><span class="a">%</span><span class="s">"</span><span class="p">&gt;</span></div>
<div class="ln" style="top:204px">59</div>
<div class="cl" style="top:204px;left:168px"><span class="p">&lt;</span><span class="h">el-table-column</span></div>
<div class="ln" style="top:221px">60</div>
<div class="cl" style="top:221px;left:232px"><span class="a">type=</span><span class="s">"selection"</span></div>
<div class="ln" style="top:238px">61</div>
<div class="cl" style="top:238px;left:232px"><span class="a">width=</span><span class="s">"55"</span><span class="p">&gt;</span></div>
<div class="ln" style="top:255px">62</div>
<div class="cl" style="top:255px;left:168px"><span class="p">&lt;/</span><span class="h">el-table-column</span><span class="p">&gt;</span></div>
<div class="ln" style="top:272px">63</div>
<div class="cl" style="top:272px;left:168px"><span class="p">&lt;</span><span class="h">el-table-column</span></div>
<div class="ln" style="top:289px">64</div>
<div class="cl" style="top:289px;left:232px"><span class="a">type=</span><span class="s">"index"</span></div>
<div class="ln" style="top:306px">65</div>
<div class="cl" style="top:306px;left:232px"><span class="a">width=</span><span class="s">"50"</span><span class="p">&gt;</span></div>
<div class="ln" style="top:323px">66</div>
<div class="cl" style="top:323px;left:168px"><span class="p">&lt;/</span><span class="h">el-table-column</span><span class="p">&gt;</span></div>
<div class="ln" style="top:340px">67</div>
<div class="cl" style="top:340px;left:168px"><span class="p">&lt;</span><span class="h">el-table-column</span></div>
<div class="ln" style="top:357px">68</div>
<div class="cl" style="top:357px;left:232px"><span class="a">prop=</span><span class="s">"brandName"</span></div>
<div class="ln" style="top:374px">69</div>
<div class="cl" style="top:374px;left:232px"><span class="a">label=</span><span class="s">"<b class="k">品牌名称</b>"</span></div>
<div class="ln" style="top:391px">70</div>
<div class="cl" style="top:391px;left:232px"><span class="a">align=</span><span class="s">"center"</span><span class="p">&gt;</span></div>
<div class="ln" style="top:408px">71</div>
<div class="cl" style="top:408px;left:168px"><span class="p">&lt;/</span><span class="h">el-table-column</span><span class="p">&gt;</span></div>
<div class="ln" style="top:425px">72</div>
<div class="cl" style="top:425px;left:168px"><span class="p">&lt;</span><span class="h">el-table-column</span></div>
<div class="ln" style="top:442px">73</div>
<div class="cl" style="top:442px;left:232px"><span class="a">prop=</span><span class="s">"companyName"</span></div>
<div class="ln" style="top:459px">74</div>
<div class="cl" style="top:459px;left:232px"><span class="a">label=</span><span class="s">"<b class="k">企业名称</b>"</span></div>
<div class="ln" style="top:476px">75</div>
<div class="cl" style="top:476px;left:232px"><span class="a">align=</span><span class="s">"center"</span><span class="p">&gt;</span></div>
<div class="ln" style="top:493px">76</div>
<div class="cl" style="top:493px;left:168px"><span class="p">&lt;/</span><span class="h">el-table-column</span><span class="p">&gt;</span></div>
<div class="ln" style="top:510px">77</div>
<div class="cl" style="top:510px;left:168px"><span class="p">&lt;</span><span class="h">el-table-column</span></div>
<div class="ln" style="top:527px">78</div>
<div class="cl" style="top:527px;left:232px"><span class="a">prop=</span><span class="s">"ordered"</span></div>
<div class="ln" style="top:544px">79</div>
<div class="cl" style="top:544px;left:232px"><span class="a">label=</span><span class="s">"<b class="k">排序</b>"</span></div>
<div class="abs" style="left:65px;top:0;width:1px;height:560px;background:#555759"></div>
<svg class="abs" style="left:61px;top:2px" width="9" height="11" viewBox="0 0 9 11"><path d="M0.500 10.500v-7l4-3 4 3v7z" fill="#2b2b2b" stroke="#6c6f72" stroke-width="1"/><path d="M2.500 6.500h4" stroke="#6c6f72" stroke-width="1"/></svg>
<svg class="abs" style="left:61px;top:19px" width="9" height="11" viewBox="0 0 9 11"><path d="M0.500 10.500v-7l4-3 4 3v7z" fill="#2b2b2b" stroke="#6c6f72" stroke-width="1"/><path d="M2.500 6.500h4" stroke="#6c6f72" stroke-width="1"/></svg>
<svg class="abs" style="left:61px;top:87px" width="9" height="11" viewBox="0 0 9 11"><path d="M0.500 10.500v-7l4-3 4 3v7z" fill="#2b2b2b" stroke="#6c6f72" stroke-width="1"/><path d="M2.500 6.500h4" stroke="#6c6f72" stroke-width="1"/></svg>
<svg class="abs" style="left:61px;top:104px" width="9" height="11" viewBox="0 0 9 11"><path d="M0.500 10.500v-7l4-3 4 3v7z" fill="#2b2b2b" stroke="#6c6f72" stroke-width="1"/><path d="M2.500 6.500h4" stroke="#6c6f72" stroke-width="1"/></svg>
<svg class="abs" style="left:61px;top:121px" width="9" height="11" viewBox="0 0 9 11"><path d="M0.500 10.500v-7l4-3 4 3v7z" fill="#2b2b2b" stroke="#6c6f72" stroke-width="1"/><path d="M2.500 6.500h4" stroke="#6c6f72" stroke-width="1"/></svg>
<svg class="abs" style="left:61px;top:257px" width="9" height="11" viewBox="0 0 9 11"><path d="M0.500 10.500v-7l4-3 4 3v7z" fill="#2b2b2b" stroke="#6c6f72" stroke-width="1"/><path d="M2.500 6.500h4" stroke="#6c6f72" stroke-width="1"/></svg>
<svg class="abs" style="left:61px;top:325px" width="9" height="11" viewBox="0 0 9 11"><path d="M0.500 10.500v-7l4-3 4 3v7z" fill="#2b2b2b" stroke="#6c6f72" stroke-width="1"/><path d="M2.500 6.500h4" stroke="#6c6f72" stroke-width="1"/></svg>
<svg class="abs" style="left:61px;top:410px" width="9" height="11" viewBox="0 0 9 11"><path d="M0.500 10.500v-7l4-3 4 3v7z" fill="#2b2b2b" stroke="#6c6f72" stroke-width="1"/><path d="M2.500 6.500h4" stroke="#6c6f72" stroke-width="1"/></svg>
<svg class="abs" style="left:61px;top:495px" width="9" height="11" viewBox="0 0 9 11"><path d="M0.500 10.500v-7l4-3 4 3v7z" fill="#2b2b2b" stroke="#6c6f72" stroke-width="1"/><path d="M2.500 6.500h4" stroke="#6c6f72" stroke-width="1"/></svg>
<svg class="abs" style="left:61px;top:38px" width="9" height="11" viewBox="0 0 9 11"><path d="M0.500 0.500v7l4 3 4-3v-7z" fill="#2b2b2b" stroke="#6c6f72" stroke-width="1"/><path d="M2.500 4.500h4" stroke="#6c6f72" stroke-width="1"/></svg>
<svg class="abs" style="left:61px;top:157px" width="9" height="11" viewBox="0 0 9 11"><path d="M0.500 0.500v7l4 3 4-3v-7z" fill="#2b2b2b" stroke="#6c6f72" stroke-width="1"/><path d="M2.500 4.500h4" stroke="#6c6f72" stroke-width="1"/></svg>
<svg class="abs" style="left:61px;top:174px" width="9" height="11" viewBox="0 0 9 11"><path d="M0.500 0.500v7l4 3 4-3v-7z" fill="#2b2b2b" stroke="#6c6f72" stroke-width="1"/><path d="M2.500 4.500h4" stroke="#6c6f72" stroke-width="1"/></svg>
<svg class="abs" style="left:61px;top:208px" width="9" height="11" viewBox="0 0 9 11"><path d="M0.500 0.500v7l4 3 4-3v-7z" fill="#2b2b2b" stroke="#6c6f72" stroke-width="1"/><path d="M2.500 4.500h4" stroke="#6c6f72" stroke-width="1"/></svg>
<svg class="abs" style="left:61px;top:276px" width="9" height="11" viewBox="0 0 9 11"><path d="M0.500 0.500v7l4 3 4-3v-7z" fill="#2b2b2b" stroke="#6c6f72" stroke-width="1"/><path d="M2.500 4.500h4" stroke="#6c6f72" stroke-width="1"/></svg>
<svg class="abs" style="left:61px;top:344px" width="9" height="11" viewBox="0 0 9 11"><path d="M0.500 0.500v7l4 3 4-3v-7z" fill="#2b2b2b" stroke="#6c6f72" stroke-width="1"/><path d="M2.500 4.500h4" stroke="#6c6f72" stroke-width="1"/></svg>
<svg class="abs" style="left:61px;top:429px" width="9" height="11" viewBox="0 0 9 11"><path d="M0.500 0.500v7l4 3 4-3v-7z" fill="#2b2b2b" stroke="#6c6f72" stroke-width="1"/><path d="M2.500 4.500h4" stroke="#6c6f72" stroke-width="1"/></svg>
<svg class="abs" style="left:61px;top:514px" width="9" height="11" viewBox="0 0 9 11"><path d="M0.500 0.500v7l4 3 4-3v-7z" fill="#2b2b2b" stroke="#6c6f72" stroke-width="1"/><path d="M2.500 4.500h4" stroke="#6c6f72" stroke-width="1"/></svg>
<div class="abs" style="left:148px;top:197px;width:241px;height:145px;border:1px solid #e02424"></div>
<div class="abs" style="left:813px;top:20px;width:163px;height:29px;background:#464646;border-radius:4px"></div>
<svg class="abs" style="left:822px;top:27px" width="16" height="16" viewBox="0 0 16 16"><circle cx="8" cy="8" r="7.200" fill="#e33b2e"/><path d="M8 8L1.800 4.300A7.200 7.200 0 0 0 8.500 15.200z" fill="#30a050"/><path d="M8 8l0.500 7.200A7.200 7.200 0 0 0 14.300 4.400z" fill="#f8c81c"/><circle cx="8" cy="8" r="3.400" fill="#f2f2f2"/><circle cx="8" cy="8" r="2.600" fill="#4a8af4"/></svg>
<svg class="abs" style="left:848px;top:27px" width="16" height="16" viewBox="0 0 16 16"><circle cx="8" cy="8.200" r="7" fill="#e8701c"/><circle cx="8.500" cy="6.800" r="4.600" fill="#2f5fb0"/><path d="M1.500 6c1 1 2 1.500 3.500 1.500 0 2 1.500 3.500 4 3.500 2 0 3-1 3.500-2 0.500 3-2 5.800-5 5.800S1 12 1.500 6z" fill="#f0901c"/><path d="M2 3.500l2.500 2.500L3 8z" fill="#e8701c"/></svg>
<svg class="abs" style="left:874px;top:27px" width="16" height="16" viewBox="0 0 16 16"><circle cx="8" cy="8" r="7.600" fill="#b8bcc4"/><circle cx="8" cy="8" r="6.800" fill="#2f86e0"/><path d="M12.200 3.800L9 9 7 7z" fill="#e8403a"/><path d="M3.800 12.200L7 7l2 2z" fill="#f4f4f4"/></svg>
<svg class="abs" style="left:900px;top:27px" width="16" height="16" viewBox="0 0 16 16"><ellipse cx="8" cy="8" rx="7.300" ry="7.300" fill="#e01c24"/><ellipse cx="8" cy="8" rx="3.700" ry="5.900" fill="#464646"/></svg>
<svg class="abs" style="left:925px;top:26px" width="18" height="18" viewBox="0 0 18 18"><text x="9.300" y="15.800" text-anchor="middle" font-family="Liberation Sans, sans-serif" font-size="25" font-weight="bold" fill="#5ccaf6">e</text><path d="M2 15.500C-1 11 6 2.500 16.500 1.800" fill="none" stroke="#e8b020" stroke-width="1.500"/></svg>
<svg class="abs" style="left:951px;top:26px" width="18" height="18" viewBox="0 0 18 18"><text x="9" y="16.200" text-anchor="middle" font-family="Liberation Sans, sans-serif" font-size="26" font-weight="bold" fill="#2d7bd6">e</text></svg>
<div class="abs" style="left:1003px;top:2px;width:10px;height:10px;background:#c89b20"></div>
<div class="abs" style="left:1001px;top:418px;width:14px;height:2px;background:#c89b20"></div>
<div class="abs" style="left:1001px;top:426px;width:14px;height:2px;background:#c89b20"></div>
<div class="abs" style="left:1001px;top:479px;width:14px;height:2px;background:#c89b20"></div>
<div class="abs" style="left:1001px;top:32px;width:14px;height:2px;background:#c89b20"></div>
<div class="abs" style="left:1001px;top:43px;width:14px;height:2px;background:#c89b20"></div>
<div class="abs" style="left:1001px;top:77px;width:14px;height:4px;background:#c89b20"></div>
<div class="abs" style="left:1001px;top:82px;width:14px;height:2px;background:#c89b20"></div>
<div class="abs" style="left:1001px;top:88px;width:14px;height:2px;background:#c89b20"></div>
<div class="abs" style="left:1001px;top:99px;width:14px;height:2px;background:#c89b20"></div>
<div class="abs" style="left:1001px;top:102.5px;width:14px;height:3px;background:#c89b20"></div>
<div class="abs" style="left:1001px;top:106.5px;width:14px;height:2px;background:#c89b20"></div>
<div class="abs" style="left:1001px;top:110px;width:14px;height:2px;background:#c89b20"></div>
<div class="abs" style="left:1001px;top:113px;width:14px;height:4px;background:#c89b20"></div>
<div class="abs" style="left:1001px;top:118px;width:14px;height:2px;background:#c89b20"></div>
<div class="abs" style="left:1001px;top:121px;width:14px;height:2px;background:#c89b20"></div>
<div class="abs" style="left:1001px;top:124px;width:14px;height:2px;background:#c89b20"></div>
<div class="abs" style="left:1001px;top:127px;width:14px;height:4px;background:#c89b20"></div>
<div class="abs" style="left:1001px;top:132px;width:14px;height:2px;background:#c89b20"></div>
<div class="abs" style="left:1001px;top:135.5px;width:14px;height:2px;background:#c89b20"></div>
<div class="abs" style="left:1001px;top:138.5px;width:14px;height:2px;background:#c89b20"></div>
<div class="abs" style="left:1001px;top:143px;width:14px;height:1.5px;background:#c89b20"></div>
<div class="abs" style="left:1001px;top:237.8px;width:14px;height:4.2px;background:#c89b20"></div>
<div class="abs" style="left:1001px;top:251px;width:14px;height:2px;background:#c89b20"></div>
<div class="abs" style="left:1001px;top:254px;width:14px;height:2px;background:#c89b20"></div>
<div class="abs" style="left:1001px;top:265px;width:14px;height:2px;background:#c89b20"></div>
<div class="abs" style="left:1001px;top:268px;width:14px;height:2px;background:#c89b20"></div>
<div class="abs" style="left:1001px;top:146px;width:14px;height:2px;background:#c89b20"></div>
<div class="abs" style="left:1001px;top:149px;width:14px;height:2.4px;background:#c89b20"></div>
<div class="abs" style="left:1001px;top:152.2px;width:14px;height:3.8px;background:#c89b20"></div>
<div class="abs" style="left:1001px;top:157px;width:14px;height:2px;background:#c89b20"></div>
<div class="abs" style="left:1001px;top:160px;width:14px;height:2.3px;background:#c89b20"></div>
<div class="abs" style="left:1001px;top:163px;width:14px;height:2.2px;background:#c89b20"></div>
<div class="abs" style="left:1001px;top:171px;width:14px;height:2px;background:#c89b20"></div>
<div class="abs" style="left:1001px;top:176px;width:14px;height:2px;background:#c89b20"></div>
<div class="abs" style="left:1001px;top:185px;width:14px;height:2px;background:#c89b20"></div>
<div class="abs" style="left:1001px;top:188px;width:14px;height:2px;background:#c89b20"></div>
<div class="abs" style="left:1001px;top:196px;width:14px;height:2px;background:#c89b20"></div>
<div class="abs" style="left:1001px;top:199px;width:14px;height:2px;background:#c89b20"></div>
<div class="abs" style="left:1001px;top:210px;width:14px;height:2px;background:#c89b20"></div>
<div class="abs" style="left:1001px;top:213px;width:14px;height:2px;background:#c89b20"></div>
<div class="abs" style="left:1001px;top:224px;width:14px;height:4px;background:#c89b20"></div>
<div class="abs" style="left:1001px;top:315px;width:14px;height:2px;background:#857b5e"></div>
<div class="abs" style="left:1001px;top:382px;width:14px;height:2px;background:#857b5e"></div>
<div class="abs" style="left:1005.500px;top:144.500px;width:9px;height:89.500px;background:rgba(118,118,118,0.880);border:1px solid #858585"></div>
</div>
<div id="crumbs"></div>
<span class="t" id="t60" style="left:402.9px;top:664.5px;font-size:13px;letter-spacing:0.209px;">html</span>
<span class="t" id="t61" style="left:452.2px;top:664.5px;font-size:13px;letter-spacing:0.524px;">body</span>
<span class="t" id="t62" style="left:506.0px;top:664.5px;font-size:13px;letter-spacing:0.408px;">div#app</span>
<span class="t" id="t63" style="left:578.0px;top:664.5px;font-size:13px;letter-spacing:0.166px;">template</span>
<span class="t" id="t64" style="left:653.4px;top:664.5px;font-size:13px;letter-spacing:0.182px;">el-table</span>
<span class="t" id="t65" style="left:721.0px;top:664.5px;font-size:13px;letter-spacing:0.162px;">el-table-column</span>
<svg class="abs" style="left:439.6px;top:669.5px" width="4" height="7" viewBox="0 0 4 7"><path d="M0.500 0.500l2.700 3-2.700 3" stroke="#696c6e" stroke-width="1" fill="none"/></svg>
<svg class="abs" style="left:493.3px;top:669.5px" width="4" height="7" viewBox="0 0 4 7"><path d="M0.500 0.500l2.700 3-2.700 3" stroke="#696c6e" stroke-width="1" fill="none"/></svg>
<svg class="abs" style="left:566.0px;top:669.5px" width="4" height="7" viewBox="0 0 4 7"><path d="M0.500 0.500l2.700 3-2.700 3" stroke="#696c6e" stroke-width="1" fill="none"/></svg>
<svg class="abs" style="left:640.8px;top:669.5px" width="4" height="7" viewBox="0 0 4 7"><path d="M0.500 0.500l2.700 3-2.700 3" stroke="#696c6e" stroke-width="1" fill="none"/></svg>
<svg class="abs" style="left:708.8px;top:669.5px" width="4" height="7" viewBox="0 0 4 7"><path d="M0.500 0.500l2.700 3-2.700 3" stroke="#696c6e" stroke-width="1" fill="none"/></svg>
<div id="rstripe"></div>
<svg class="abs" style="left:1349px;top:85px" width="11" height="13" viewBox="0 0 11 13"><ellipse cx="5.500" cy="2.600" rx="1.800" ry="2.100" fill="#afb1b3"/><ellipse cx="5.500" cy="6.300" rx="1.500" ry="1.700" fill="#afb1b3"/><ellipse cx="5.500" cy="10.200" rx="2.200" ry="2.600" fill="#afb1b3"/><path d="M1 1.500l3 3.800M10 1.500L7 5.300M0.500 6.500h3.500M10.500 6.500H7M1.500 9L0.500 12.500M9.500 9l1 3.500M4 7.500L1.500 9M7 7.500L9.500 9" stroke="#afb1b3" stroke-width="0.900" fill="none"/></svg>
<span class="t v" id="t66" style="left:1352.5px;top:101.7px;font-size:11.5px;transform-origin:0 0;transform:rotate(90deg) translateY(-8px);letter-spacing:0.319px;color:#bbbbbb;">Ant Build</span>
<svg class="abs" style="left:1349px;top:171px" width="11" height="13" viewBox="0 0 11 13"><ellipse cx="5.500" cy="2.500" rx="5.500" ry="2.500" fill="#afb1b3"/><path d="M0 4.300c0 3 11 3 11 0v1.700c0 3-11 3-11 0zM0 7.300c0 3 11 3 11 0V9c0 3-11 3-11 0zM0 10.300c0 3 11 3 11 0V11c0 2.700-11 2.700-11 0z" fill="#afb1b3"/></svg>
<span class="t v" id="t67" style="left:1352.5px;top:189.6px;font-size:11.5px;transform-origin:0 0;transform:rotate(90deg) translateY(-8px);letter-spacing:-0.104px;color:#bbbbbb;">Database</span>
<span class="t" style="left:1347.500px;top:255px;font-size:16px;font-style:italic;font-weight:bold;color:#bbbbbb;line-height:16px;letter-spacing:-1px">m</span>
<span class="t v" id="t68" style="left:1352.5px;top:277.0px;font-size:11.5px;transform-origin:0 0;transform:rotate(90deg) translateY(-8px);letter-spacing:0.024px;color:#bbbbbb;">Maven Projects</span>
<div id="bottom"></div>
<svg class="abs" style="left:30px;top:690px" width="13" height="14" viewBox="0 0 13 14"><ellipse cx="6" cy="8" rx="3.400" ry="4.600" fill="#afb1b3"/><circle cx="6" cy="3" r="2" fill="#afb1b3"/><path d="M0.500 5l3 1.500M11.500 5l-3 1.500M0 8.500h3M12 8.500H9M0.500 12.500l3-1.500M11.500 12.500l-3-1.500M4 0.500l1 1.500M8 0.500L7 2" stroke="#afb1b3" stroke-width="1.100" fill="none"/><circle cx="10.500" cy="11.500" r="2.300" fill="#3c3f41"/><circle cx="10.500" cy="11.500" r="1.700" fill="#2be02b"/></svg>
<span class="t" id="t69" style="left:46.0px;top:689.2px;font-size:11.5px;letter-spacing:0.077px;text-underline-offset:1px;"><u>5</u>: Debug</span>
<svg class="abs" style="left:116px;top:692px" width="10" height="9" viewBox="0 0 10 9"><path d="M0 1h2M3.500 1H10M0 4.500h2M3.500 4.500H10M0 8h2M3.500 8H10" stroke="#afb1b3" stroke-width="1.600"/></svg>
<span class="t" id="t70" style="left:131.3px;top:689.2px;font-size:11.5px;letter-spacing:-0.287px;text-underline-offset:1px;"><u>6</u>: TODO</span>
<svg class="abs" style="left:197px;top:691px" width="11" height="10" viewBox="0 0 11 10"><rect width="11" height="10" fill="#afb1b3"/><path d="M2 2.500l2.500 2.500L2 7.500M5.500 8h3.500" stroke="#3c3f41" stroke-width="1.200" fill="none"/></svg>
<span class="t" id="t71" style="left:213.4px;top:689.2px;font-size:11.5px;letter-spacing:0.129px;">Terminal</span>
<svg class="abs" style="left:281px;top:692px" width="11" height="9" viewBox="0 0 11 9"><path d="M0 1h11M0 4.500h7M0 8h9" stroke="#afb1b3" stroke-width="1.600"/></svg>
<span class="t" id="t72" style="left:297.1px;top:689.2px;font-size:11.5px;letter-spacing:-0.156px;text-underline-offset:1px;"><u>0</u>: Messages</span>
<svg class="abs" style="left:382.5px;top:691px" width="14" height="10" viewBox="0 0 14 10"><rect width="14" height="10" fill="#afb1b3"/><path d="M5.500 2.500H2.500v5h3M2.500 5h2.500M11.500 2.500H8.500v5h3M8.500 5H11" stroke="#3c3f41" stroke-width="1.200" fill="none"/></svg>
<span class="t" id="t73" style="left:400.0px;top:689.2px;font-size:11.5px;letter-spacing:-0.127px;">Java Enterprise</span>
<svg class="abs" style="left:502.5px;top:691px" width="13" height="11" viewBox="0 0 13 11"><path d="M0 0.800h9M0 4h3M0 7.200h3M0 10.200h3" stroke="#afb1b3" stroke-width="1.600"/><path d="M5.500 3.500l7 3.700-7 3.700z" fill="#afb1b3"/></svg>
<span class="t" id="t74" style="left:519.4px;top:689.2px;font-size:11.5px;letter-spacing:0.122px;">Application Servers</span>
<svg class="abs" style="left:1266px;top:690px" width="13" height="13" viewBox="0 0 13 13"><path d="M6.500 0a6.500 6.500 0 0 1 6.500 6.500V13H6.500a6.500 6.500 0 0 1 0-13z" fill="#499c54"/><text x="6.300" y="10.200" text-anchor="middle" font-family="Liberation Sans, sans-serif" font-size="10" font-weight="bold" fill="#ffffff">1</text></svg>
<span class="t" id="t75" style="left:1283.5px;top:689.0px;font-size:11.5px;letter-spacing:0.034px;">Event Log</span>
<div id="status"></div>
<div class="abs" style="left:9px;top:713px;width:12px;height:10px;border:1.500px solid #afb1b3"></div>
<span class="t" id="t76" style="left:31.0px;top:710.0px;font-size:13px;letter-spacing:0.009px;">Compilation completed successfully in 2 s 750 ms (24 minutes ago)</span>
<span class="t" id="t77" style="left:1181.5px;top:710.0px;font-size:13px;letter-spacing:-0.549px;">64:20</span>
<span class="t" id="t78" style="left:1223.3px;top:710.0px;font-size:13px;letter-spacing:-0.901px;">CRLF ÷</span>
<span class="t" id="t79" style="left:1274.7px;top:710.0px;font-size:13px;letter-spacing:-0.383px;">UTF-8 ÷</span>
<svg class="abs" style="left:1320px;top:710px" width="8" height="12" viewBox="0 0 8 12"><path d="M1.500 5V3.500a2.500 2.500 0 0 1 5 0V5" fill="none" stroke="#afb1b3" stroke-width="1.400"/><rect x="0" y="5" width="8" height="7" fill="#afb1b3"/></svg>
<svg class="abs" style="left:1346px;top:711px" width="10" height="10" viewBox="0 0 10 10"><circle cx="5" cy="5" r="4.300" fill="none" stroke="#afb1b3" stroke-width="1.200"/><path d="M5 2v4" stroke="#afb1b3" stroke-width="1.200"/></svg>
</body>
</html>
